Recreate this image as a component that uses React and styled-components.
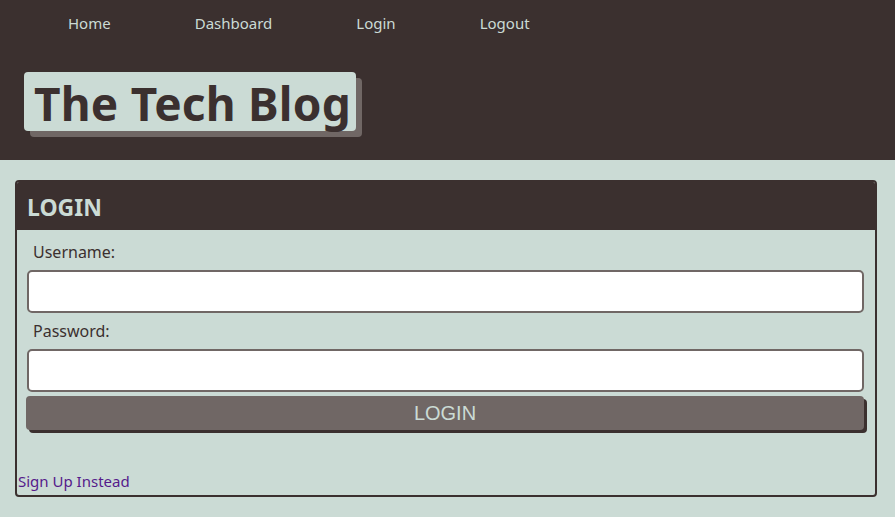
import React from "react";
import styled, { createGlobalStyle } from "styled-components";

const Colors = {
  dark: "#3b302f",
  mint: "#cbdbd5",
  gray: "#706765",
  link: "#551a8b",
};

const GlobalStyle = createGlobalStyle`
  html, body {
    margin: 0;
    padding: 0;
    background: ${Colors.mint};
    font-family: "Noto Sans", "Open Sans", sans-serif;
  }
`;

const Header = styled.header`
  background: ${Colors.dark};
  height: 160px;
  box-sizing: border-box;
  padding-top: 12px;
`;

const Nav = styled.nav`
  display: flex;
  gap: 84px;
  padding-left: 68px;
  height: 22px;
  align-items: center;
`;

const NavLink = styled.a`
  color: ${Colors.mint};
  font-size: 15px;
  text-decoration: none;
  cursor: pointer;
`;

const TitleBox = styled.h1`
  display: inline-block;
  margin: 38px 0 0 24px;
  height: 59px;
  line-height: 62px;
  padding: 0 5px 0 10px;
  background: ${Colors.mint};
  color: ${Colors.dark};
  font-size: 46px;
  font-weight: 700;
  border-radius: 4px;
  box-shadow: 6px 6px 0 ${Colors.gray};
  letter-spacing: 0.2px;
`;

const Main = styled.main`
  padding: 20px 18px 21px 15px;
`;

const Card = styled.section`
  border: 2px solid ${Colors.dark};
  border-radius: 4px;
  overflow: hidden;
`;

const CardHeader = styled.h2`
  margin: 0;
  height: 48px;
  line-height: 50px;
  padding-left: 10px;
  background: ${Colors.dark};
  color: ${Colors.mint};
  font-size: 23px;
  font-weight: 700;
`;

const Form = styled.form`
  display: flex;
  flex-direction: column;
  padding: 0 11px 0 10px;
`;

const Label = styled.label`
  color: ${Colors.dark};
  font-size: 16px;
  padding-left: 6px;
  height: ${(p) => p.$h}px;
  line-height: ${(p) => p.$lh}px;
`;

const Input = styled.input`
  box-sizing: border-box;
  height: 43px;
  border: 2px solid ${Colors.gray};
  border-radius: 5px;
  background: #fff;
  font-size: 16px;
`;

const Button = styled.button`
  margin-top: 4px;
  margin-left: -1px;
  height: 34px;
  border: none;
  border-radius: 4px;
  background: ${Colors.gray};
  color: ${Colors.mint};
  font-family: "Liberation Sans", Arial, sans-serif;
  font-size: 20px;
  box-shadow: 3px 3px 0 ${Colors.dark};
  cursor: pointer;
`;

const SignUp = styled.a`
  display: block;
  margin-top: 40px;
  padding: 0 0 3px 1px;
  color: ${Colors.link};
  font-size: 15px;
  line-height: 22px;
  text-decoration: none;
`;

export default function App() {
  return (
    <>
      <GlobalStyle />
      <Header>
        <Nav>
          <NavLink>Home</NavLink>
          <NavLink>Dashboard</NavLink>
          <NavLink>Login</NavLink>
          <NavLink>Logout</NavLink>
        </Nav>
        <TitleBox>The Tech Blog</TitleBox>
      </Header>
      <Main>
        <Card>
          <CardHeader>LOGIN</CardHeader>
          <Form onSubmit={(e) => e.preventDefault()}>
            <Label htmlFor="username" $h={40} $lh={44}>
              Username:
            </Label>
            <Input id="username" type="text" />
            <Label htmlFor="password" $h={36} $lh={36}>
              Password:
            </Label>
            <Input id="password" type="password" />
            <Button type="submit">LOGIN</Button>
          </Form>
          <SignUp>Sign Up Instead</SignUp>
        </Card>
      </Main>
    </>
  );
}
